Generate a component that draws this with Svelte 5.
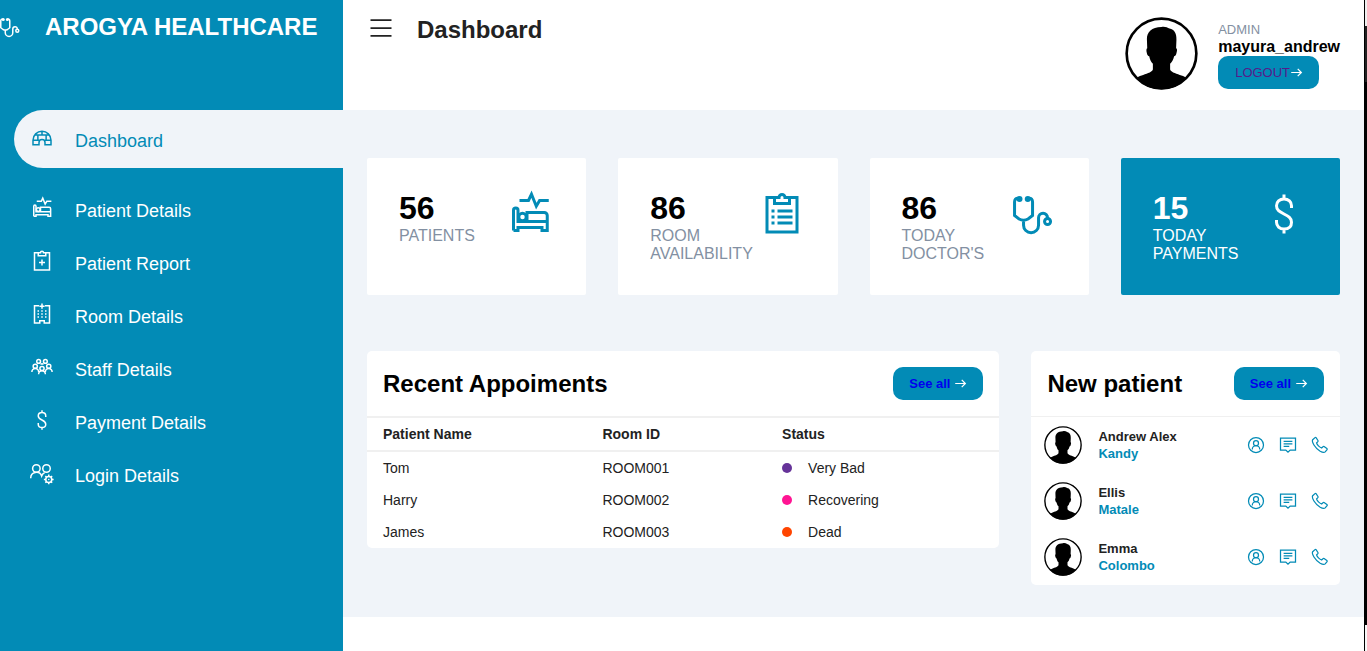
<script>
  const nav = [
    { label: 'Dashboard', icon: 'igloo', active: true },
    { label: 'Patient Details', icon: 'bed' },
    { label: 'Patient Report', icon: 'notes' },
    { label: 'Room Details', icon: 'hospital' },
    { label: 'Staff Details', icon: 'users' },
    { label: 'Payment Details', icon: 'dollar' },
    { label: 'Login Details', icon: 'userscog' }
  ];

  const cards = [
    { value: 56, label: 'PATIENTS', icon: 'bed' },
    { value: 86, label: 'ROOM AVAILABILITY', icon: 'clipboard' },
    { value: 86, label: "TODAY DOCTOR'S", icon: 'stethoscope' },
    { value: 15, label: 'TODAY PAYMENTS', icon: 'dollar', accent: true }
  ];

  const appointments = [
    { name: 'Tom', room: 'ROOM001', status: 'Very Bad', tone: 'purple' },
    { name: 'Harry', room: 'ROOM002', status: 'Recovering', tone: 'pink' },
    { name: 'James', room: 'ROOM003', status: 'Dead', tone: 'orange' }
  ];

  const patients = [
    { name: 'Andrew Alex', city: 'Kandy' },
    { name: 'Ellis', city: 'Matale' },
    { name: 'Emma', city: 'Colombo' }
  ];
</script>

{#snippet icon(name)}
  <svg class="icon" viewBox="0 0 32 32" aria-hidden="true">
    {#if name === 'stethoscope'}
      <path d="M6.500 5.500C4.500 5.200 3.700 6.500 3.700 8v9l3 2.300q3 1.600 6 0l3-2.300V8c0-1.500-.8-2.800-2.800-2.500M9.700 20.500V23.500a5 5 0 0 0 10 0v-5a3 3 0 0 1 6 0v.5" />
      <circle cx="25.700" cy="21" r="2" />
      <circle class="solid" cx="7" cy="6" r="2" />
      <circle class="solid" cx="12.500" cy="6" r="2" />
    {:else if name === 'bed'}
      <path d="M9 7h6l2-4.200 3.200 8L22.400 7H28.500" />
      <path d="M5 27V13.500a1.500 1.500 0 0 1 3 0V21h19.500M5 27h3v-2h16v2h3.500V17a2 2 0 0 0-2-2H14v6" />
      <circle cx="11" cy="18" r="2.500" />
    {:else if name === 'clipboard'}
      <path d="M11 5H6v23h20V5h-5M11 5v4h10V5h-3a2 2 0 0 0-4 0zM13 14h10M13 18h10M13 22h10M9 14h2M9 18h2M9 22h2" />
    {:else if name === 'notes'}
      <path d="M11 5H6v23h20V5h-5M11 5v4h10V5h-3a2 2 0 0 0-4 0zM16 14v8M12 18h8" />
    {:else if name === 'dollar'}
      <path d="M21 12v-1.500C21 8 19 6 16 6s-5 2-5 4.500c0 3 2 4 5 5.500s5 2.500 5 5.500S19 26 16 26s-5-2-5-4.500V20M16 3v3M16 26v3" />
    {:else if name === 'igloo'}
      <path d="M4 25v-6a12 12 0 0 1 24 0v6h-8v-3a4 4 0 0 0-8 0v3zM7 12h18M16 7v5M4 19h9M19 19h9M10.500 12v7M21.500 12v7" />
    {:else if name === 'hospital'}
      <path d="M12 5H6v23h7v-3h6v3h7V5h-6M16 2v7M12.500 5.500h7" />
      <path d="M10 12h2M15 12h2M20 12h2M10 16h2M15 16h2M20 16h2M10 20h2M15 20h2M20 20h2" />
    {:else if name === 'users'}
      <circle cx="11.500" cy="8.500" r="2.500" />
      <circle cx="20.500" cy="8.500" r="2.500" />
      <circle cx="7" cy="15" r="2.800" />
      <circle cx="25" cy="15" r="2.800" />
      <circle cx="16" cy="18" r="2.800" />
      <path d="M2.500 22.500a4.500 4.500 0 0 1 9 0M20.500 22.500a4.500 4.500 0 0 1 9 0M11.500 25.500a4.500 4.500 0 0 1 9 0M14 12.500q2-1.500 4 0" />
    {:else if name === 'userscog'}
      <circle cx="8.500" cy="10" r="5" />
      <circle cx="22" cy="10" r="5" />
      <path d="M1 23a7.500 7.500 0 0 1 14.500-3 7.500 7.500 0 0 1 4-4.500" />
      <circle cx="25" cy="24.500" r="4" />
      <circle class="solid" cx="25" cy="24.500" r="1" />
      <path d="M25 18v2.500M25 28.500V31M18.500 24.500H21M29 24.500h2.500M20.500 20l1.700 1.700M27.800 27.300l1.700 1.700M29.500 20l-1.700 1.700M22.200 27.300 20.500 29" />
    {:else if name === 'bars'}
      <path d="M4 7h24M4 16h24M4 25h24" />
    {:else if name === 'arrow'}
      <path d="M3 16h25M19 7l9 9-9 9" />
    {:else if name === 'usercircle'}
      <circle cx="16" cy="16" r="12" />
      <circle cx="16" cy="13" r="4" />
      <path d="M10 23a6 6 0 0 1 12 0" />
    {:else if name === 'comment'}
      <path d="M4 5h24v19h-8.500L16 27.500 12.500 24H4zM9 10h14M9 14h14M9 18h9" />
    {:else if name === 'phone'}
      <path d="M8 4.200 4.300 7.500C3.300 9 3.900 12 6.300 16c2.500 4 6 7.500 10 10 3.500 2 6.500 2.500 8 1l3-3.500q.6-1-.3-1.800l-4.500-3.200q-1-.6-1.800.2l-2.200 2q-2.700-.8-5-3.200t-3-4.800l2-2q.8-.9.2-1.900l-3-4.500q-.8-.9-1.700-.1z" />
    {/if}
  </svg>
{/snippet}

{#snippet avatar()}
  <svg class="avatar" viewBox="0 0 220 220" role="img" aria-label="Profile picture">
    <circle class="ring" cx="110" cy="110" r="105" />
    <path d="M110 30c9-2 18 1 24 5 15 3 22 15 21 34l-1 25c4 1 3 8 1 15-1 6-4 9-7 9-2 9-6 17-12 23v17c4 10 22 13 34 18 7 2 13 5 16 8-19 22-46 34-76 34s-57-12-76-34c3-3 9-6 16-8 12-5 30-8 34-18v-17c-6-6-9-14-11-23-4 0-6-4-7-9-2-7-2-14 1-15l-1-28c0-21 14-35 44-36z" />
  </svg>
{/snippet}

<div class="shell">
  <aside class="sidebar">
    <div class="brand">
      {@render icon('stethoscope')}
      <h2>AROGYA HEALTHCARE</h2>
    </div>
    <nav>
      {#each nav as item}
        <a href="#top" class:active={item.active}>
          {@render icon(item.icon)}
          <span>{item.label}</span>
        </a>
      {/each}
    </nav>
  </aside>

  <div class="content">
    <header>
      <div class="title">
        <button class="toggle" aria-label="Toggle menu">{@render icon('bars')}</button>
        <h2>Dashboard</h2>
      </div>
      <div class="user">
        {@render avatar()}
        <div>
          <small>ADMIN</small>
          <h4>mayura_andrew</h4>
          <a class="button logout" href="#top">LOGOUT{@render icon('arrow')}</a>
        </div>
      </div>
    </header>

    <main>
      <section class="cards">
        {#each cards as card}
          <article class="stat" class:accent={card.accent}>
            <div>
              <h1>{card.value}</h1>
              <span>{card.label}</span>
            </div>
            {@render icon(card.icon)}
          </article>
        {/each}
      </section>

      <section class="panels">
        <article class="panel">
          <div class="panel-head">
            <h2>Recent Appoiments</h2>
            <a class="button see" href="#top">See all {@render icon('arrow')}</a>
          </div>
          <table>
            <thead>
              <tr><th class="name">Patient Name</th><th class="room">Room ID</th><th>Status</th></tr>
            </thead>
            <tbody>
              {#each appointments as row}
                <tr>
                  <td>{row.name}</td>
                  <td>{row.room}</td>
                  <td><span class="dot {row.tone}"></span>{row.status}</td>
                </tr>
              {/each}
            </tbody>
          </table>
        </article>

        <article class="panel">
          <div class="panel-head">
            <h2>New patient</h2>
            <a class="button see" href="#top">See all {@render icon('arrow')}</a>
          </div>
          {#each patients as patient}
            <div class="patient">
              {@render avatar()}
              <div class="info">
                <h4>{patient.name}</h4>
                <small>{patient.city}</small>
              </div>
              <div class="contact">
                <a href="#top" aria-label="Profile of {patient.name}">{@render icon('usercircle')}</a>
                <a href="#top" aria-label="Message {patient.name}">{@render icon('comment')}</a>
                <a href="#top" aria-label="Call {patient.name}">{@render icon('phone')}</a>
              </div>
            </div>
          {/each}
        </article>
      </section>
    </main>
  </div>
  <div class="rail"></div>
</div>

<style>
  :global(body) {
    margin: 0;
    background: #fff;
  }
  .shell {
    --main: #028bb6;
    --grey: #8390a2;
    --page: #f0f4f9;
    display: grid;
    grid-template-columns: 343px minmax(0, 1fr) 3px;
    min-height: 100vh;
    color: #222;
    font-family: 'Liberation Sans', Arial, sans-serif;
    font-size: 16px;
  }
  .shell *,
  .shell {
    box-sizing: border-box;
  }
  h1, h2, h4 {
    margin: 0;
  }
  h2 {
    font-size: 24px;
    line-height: 28px;
  }
  a {
    color: inherit;
    text-decoration: none;
  }
  .icon {
    display: block;
    flex: none;
    width: 24px;
    height: 24px;
    fill: none;
    stroke: currentColor;
    stroke-width: 2;
  }
  .icon .solid {
    fill: currentColor;
    stroke: none;
  }

  .sidebar {
    background: var(--main);
    color: #fff;
    overflow: hidden;
  }
  .brand {
    display: flex;
    gap: 23px;
    height: 110px;
    padding-top: 13px;
    margin-left: -2px;
    white-space: nowrap;
  }
  .brand .icon {
    margin-top: 2px;
  }
  nav {
    padding-left: 14px;
  }
  nav a {
    display: flex;
    gap: 21px;
    height: 53px;
    padding: 12px 16px;
    font-size: 18px;
    line-height: 30px;
  }
  nav a.active {
    height: 58px;
    padding-top: 16px;
    margin-bottom: 16px;
    border-radius: 30px 0 0 30px;
    background: var(--page);
    color: var(--main);
  }

  header {
    display: flex;
    justify-content: space-between;
    height: 110px;
    padding: 16px 24px;
  }
  .title {
    display: flex;
    gap: 22px;
    align-items: flex-start;
  }
  .toggle {
    padding: 0;
    border: 0;
    background: none;
    color: inherit;
  }
  .toggle .icon {
    width: 28px;
    height: 24px;
  }
  .toggle .icon {
    height: 28px;
    margin-top: -2px;
  }
  .user {
    display: flex;
    gap: 20px;
  }
  .user .avatar {
    width: 73px;
    height: 73px;
    margin-top: 1px;
  }
  .user .ring {
    stroke-width: 9;
  }
  .user small {
    display: block;
    margin-top: 6px;
    font-size: 13px;
    line-height: 16px;
    color: var(--grey);
  }
  .user h4 {
    font-size: 16px;
    line-height: 18px;
    color: #000;
  }
  .avatar {
    display: block;
    flex: none;
  }
  .avatar .ring {
    fill: #fff;
    stroke: #000;
    stroke-width: 8;
  }

  .button {
    display: inline-flex;
    align-items: center;
    height: 33px;
    padding: 0 16px;
    border-radius: 10px;
    background: var(--main);
    font-size: 13px;
    white-space: nowrap;
  }
  .button .icon {
    width: 13px;
    height: 13px;
    color: #fff;
    stroke-width: 3;
  }
  .logout {
    padding-left: 17px;
    color: #551a8b;
  }
  .see {
    gap: 4px;
    color: #00e;
    font-weight: bold;
  }

  main {
    padding: 48px 24px 32px;
    background: var(--page);
  }
  .cards {
    display: grid;
    grid-template-columns: repeat(4, minmax(0, 1fr));
    gap: 32px;
  }
  .stat {
    display: flex;
    justify-content: space-between;
    min-height: 137px;
    padding: 32px;
    border-radius: 2px;
    background: #fff;
    color: var(--main);
  }
  .stat h1 {
    font-size: 32px;
    line-height: 37px;
    color: #000;
  }
  .stat span {
    display: block;
    line-height: 18px;
    color: var(--grey);
  }
  .stat .icon {
    width: 48px;
    height: 48px;
  }
  .stat.accent {
    background: var(--main);
  }
  .stat.accent,
  .stat.accent h1,
  .stat.accent span {
    color: #fff;
  }

  .panels {
    display: grid;
    grid-template-columns: 65% minmax(0, 1fr);
    gap: 32px;
    align-items: start;
    margin-top: 56px;
  }
  .panel {
    border-radius: 5px;
    background: #fff;
  }
  .panel-head {
    display: flex;
    align-items: center;
    justify-content: space-between;
    padding: 16px;
    border-bottom: 1px solid #f0f0f0;
  }
  .panel h2 {
    color: #000;
  }
  table {
    width: 100%;
    table-layout: fixed;
    border-spacing: 0;
    font-size: 14px;
    line-height: 16px;
  }
  th, td {
    height: 32px;
    padding: 0 16px;
    text-align: left;
  }
  th {
    height: 35px;
    border-top: 1px solid #f0f0f0;
    border-bottom: 2px solid #f0f0f0;
  }
  .name {
    width: 34.7%;
  }
  .room {
    width: 28.4%;
  }
  .dot {
    display: inline-block;
    width: 10px;
    height: 10px;
    margin-right: 16px;
    border-radius: 50%;
  }
  .purple { background: rebeccapurple; }
  .pink { background: deeppink; }
  .orange { background: orangered; }

  .patient {
    display: flex;
    align-items: center;
    height: 56px;
    padding: 0 10px 0 13px;
  }
  .patient .avatar {
    width: 38px;
    height: 38px;
  }
  .info {
    flex: 1;
    margin-left: 16px;
    font-weight: bold;
  }
  .info h4,
  .info small {
    display: block;
    font-size: 13px;
    line-height: 17px;
  }
  .info small,
  .contact {
    color: var(--main);
  }
  .contact {
    display: flex;
    gap: 12px;
  }
  .contact .icon {
    width: 20px;
    height: 20px;
  }

  .rail {
    border-left: 1px solid #000;
    background: linear-gradient(#f0f0f0 26px, #222 26px, #222 82px, #000 82px, #000 calc(100% - 26px), #f8f8f8 calc(100% - 26px));
  }
</style>
